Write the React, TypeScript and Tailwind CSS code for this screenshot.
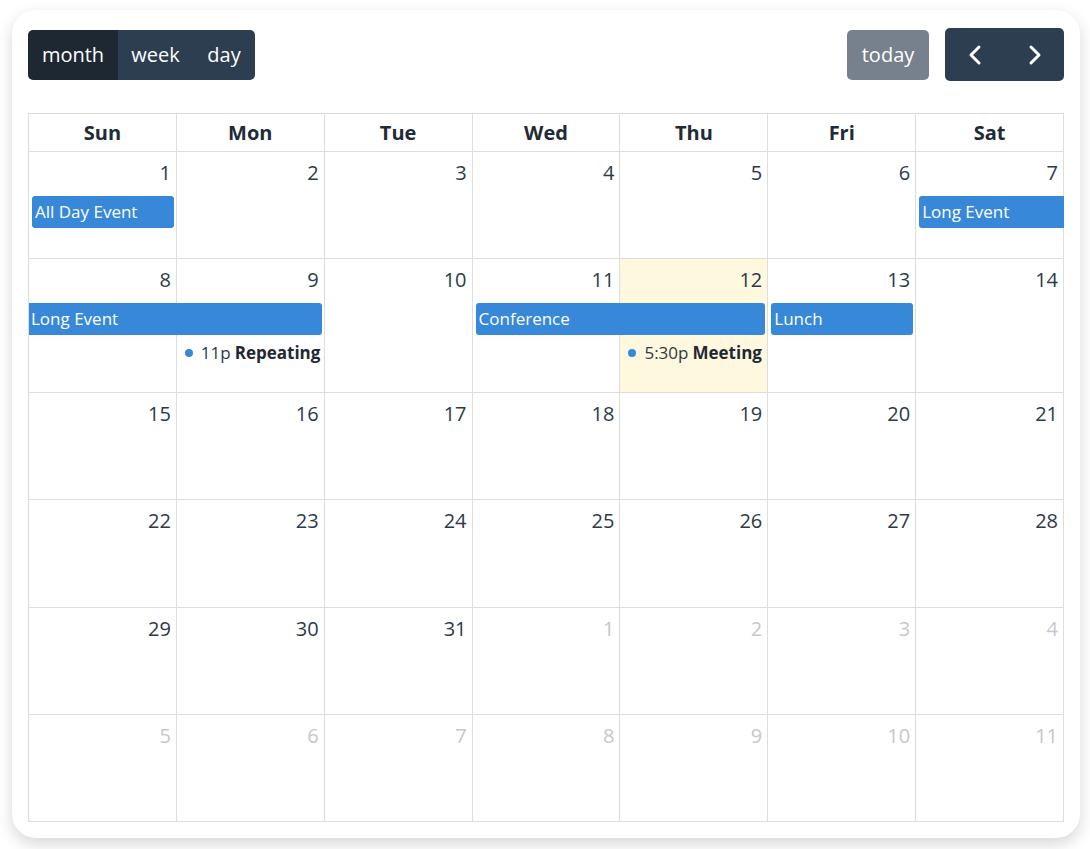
import React from "react";

type Ev =
  | { kind: "bar"; title: string; col: number; span: number; row: number; contLeft?: boolean; contRight?: boolean }
  | { kind: "dot"; time: string; title: string; col: number; row: number };

type Week = { days: { n: number; other?: boolean; today?: boolean }[]; h: string; events: Ev[] };

const weeks: Week[] = [
  {
    days: [1, 2, 3, 4, 5, 6, 7].map((n) => ({ n })),
    h: "h-[107px]",
    events: [
      { kind: "bar", title: "All Day Event", col: 1, span: 1, row: 1 },
      { kind: "bar", title: "Long Event", col: 7, span: 1, row: 1, contRight: true },
    ],
  },
  {
    days: [8, 9, 10, 11, 12, 13, 14].map((n) => ({ n, today: n === 12 })),
    h: "h-[134px]",
    events: [
      { kind: "bar", title: "Long Event", col: 1, span: 2, row: 1, contLeft: true },
      { kind: "bar", title: "Conference", col: 4, span: 2, row: 1 },
      { kind: "bar", title: "Lunch", col: 6, span: 1, row: 1 },
      { kind: "dot", time: "11p", title: "Repeating", col: 2, row: 2 },
      { kind: "dot", time: "5:30p", title: "Meeting", col: 5, row: 2 },
    ],
  },
  { days: [15, 16, 17, 18, 19, 20, 21].map((n) => ({ n })), h: "h-[107px]", events: [] },
  { days: [22, 23, 24, 25, 26, 27, 28].map((n) => ({ n })), h: "h-[108px]", events: [] },
  {
    days: [29, 30, 31, 1, 2, 3, 4].map((n, i) => ({ n, other: i > 2 })),
    h: "h-[107px]",
    events: [],
  },
  { days: [5, 6, 7, 8, 9, 10, 11].map((n) => ({ n, other: true })), h: "h-[107px]", events: [] },
];

const colStart: Record<number, string> = {
  1: "col-start-1",
  2: "col-start-2",
  3: "col-start-3",
  4: "col-start-4",
  5: "col-start-5",
  6: "col-start-6",
  7: "col-start-7",
};
const colSpan: Record<number, string> = { 1: "col-span-1", 2: "col-span-2", 3: "col-span-3" };
const rowStart: Record<number, string> = { 1: "row-start-1", 2: "row-start-2" };

function Chevron({ dir }: { dir: "left" | "right" }) {
  return (
    <svg width="14" height="22" viewBox="0 0 14 22" fill="none">
      <polyline
        points={dir === "left" ? "11,3 3,11 11,19" : "3,3 11,11 3,19"}
        stroke="white"
        strokeWidth="3"
        strokeLinecap="round"
        strokeLinejoin="round"
      />
    </svg>
  );
}

export default function App() {
  return (
    <div
      className="min-h-screen bg-white pt-[10px] pl-[12px] text-[20px] text-[#212529]"
      style={{ fontFamily: '"Segoe UI", "Open Sans", "Noto Sans", sans-serif' }}
    >
      <div className="w-[1068px] rounded-[24px] bg-white pt-[18px] px-4 pb-4 shadow-[0_6px_16px_rgba(0,0,0,0.16)]">
        {/* toolbar */}
        <div className="flex h-[53px] items-center justify-between mb-[32px]">
          <div className="flex h-[50px] overflow-hidden rounded-[5px] text-white">
            <div className="flex w-[90px] items-center justify-center bg-[#1e2833]">month</div>
            <div className="flex w-[75px] items-center justify-center bg-[#2c3e50]">week</div>
            <div className="flex w-[62px] items-center justify-center bg-[#2c3e50]">day</div>
          </div>
          <div className="flex items-center gap-4">
            <div className="flex h-[50px] w-[82px] items-center justify-center rounded-[5px] bg-[#76818d] text-white">
              today
            </div>
            <div className="flex h-[53px] overflow-hidden rounded-[5px] bg-[#2c3e50]">
              <div className="flex w-[60px] items-center justify-center">
                <Chevron dir="left" />
              </div>
              <div className="flex w-[59px] items-center justify-center">
                <Chevron dir="right" />
              </div>
            </div>
          </div>
        </div>

        {/* grid */}
        <div className="w-[1036px] border-l border-t border-[#dddddd]">
          <div className="grid h-[38px] grid-cols-7">
            {["Sun", "Mon", "Tue", "Wed", "Thu", "Fri", "Sat"].map((d) => (
              <div
                key={d}
                className="flex items-center justify-center border-b border-r border-[#dddddd] font-bold text-[#212b36]"
              >
                {d}
              </div>
            ))}
          </div>
          {weeks.map((w, wi) => (
            <div key={wi} className={`relative grid grid-cols-7 ${w.h}`}>
              {w.days.map((d, di) => (
                <div
                  key={di}
                  className={`border-b border-r border-[#dddddd] ${d.today ? "bg-[#fef8df]" : ""}`}
                >
                  <div
                    className={`h-[44px] pt-[6px] pr-[5px] text-right leading-[30px] ${
                      d.other ? "text-[#c4c8cc]" : "text-[#2c3a48]"
                    }`}
                  >
                    {d.n}
                  </div>
                </div>
              ))}
              {w.events.length > 0 && (
                <div className="absolute left-0 right-0 top-[44px] grid grid-cols-7 auto-rows-min gap-y-[3px]">
                  {w.events.map((e, ei) =>
                    e.kind === "bar" ? (
                      <div
                        key={ei}
                        className={`${colStart[e.col]} ${colSpan[e.span]} ${rowStart[e.row]} flex h-[32px] items-center bg-[#3788d8] text-[17px] text-white ${
                          e.contLeft ? "ml-0 pl-[2px]" : "ml-[3px] rounded-l-[3px] pl-[3px]"
                        } ${e.contRight ? "mr-0" : "mr-[3px] rounded-r-[3px]"}`}
                      >
                        {e.title}
                      </div>
                    ) : (
                      <div
                        key={ei}
                        className={`${colStart[e.col]} ${rowStart[e.row]} flex h-[30px] items-center pl-[8px] text-[17px] text-[#2c3a48] whitespace-nowrap`}
                      >
                        <span className="mr-[4px] inline-block h-[8px] w-[8px] rounded-full bg-[#3788d8]" />
                        <span className="ml-[4px]">{e.time}</span>
                        <span className="ml-[4px] font-bold text-[#1f2933]">{e.title}</span>
                      </div>
                    )
                  )}
                </div>
              )}
            </div>
          ))}
        </div>
      </div>
    </div>
  );
}
